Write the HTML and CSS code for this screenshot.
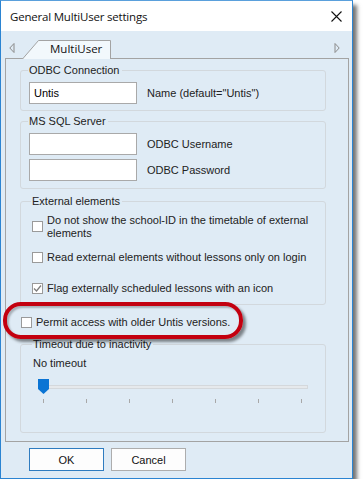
FILE: index.html
```html
<!DOCTYPE html>
<html lang="en">
<head>
    <meta charset="UTF-8">
    <title>General MultiUser settings</title>
    <link rel="stylesheet" href="styles.css">
</head>
<body>
    <div class="window">
        <div class="titlebar">
            <span class="title">General MultiUser settings</span>
            <svg class="close" width="11" height="11" viewBox="0 0 11 11">
                <path d="M0.5 0.5 L10.5 10.5 M10.5 0.5 L0.5 10.5" stroke="#111" stroke-width="1.1"/>
            </svg>
        </div>

        <div class="client">
            <div class="tab-row">
                <svg class="arrow" width="6" height="10" viewBox="0 0 6 10">
                    <path d="M5 0.5 L0.8 5 L5 9.5 Z" fill="none" stroke="#8a8a8a"/>
                </svg>
                <div class="tab">
                    <svg class="tab-shape" width="90" height="19" viewBox="0 0 90 19">
                        <path d="M0.5 19 L16.5 0.5 L88.5 0.5 L88.5 19" fill="#f2f8fc" stroke="#a3a3a3"/>
                    </svg>
                    <span class="tab-label">MultiUser</span>
                </div>
                <svg class="arrow arrow-right" width="6" height="10" viewBox="0 0 6 10">
                    <path d="M1 0.5 L5.2 5 L1 9.5 Z" fill="none" stroke="#8a8a8a"/>
                </svg>
            </div>

            <div class="panel">
                <fieldset class="group group-odbc">
                    <legend>ODBC Connection</legend>
                    <div class="field-row">
                        <div class="textbox">Untis</div>
                        <span class="field-label">Name (default="Untis")</span>
                    </div>
                </fieldset>

                <fieldset class="group group-sql">
                    <legend>MS SQL Server</legend>
                    <div class="field-row">
                        <div class="textbox"></div>
                        <span class="field-label">ODBC Username</span>
                    </div>
                    <div class="field-row second">
                        <div class="textbox"></div>
                        <span class="field-label">ODBC Password</span>
                    </div>
                </fieldset>

                <fieldset class="group group-ext">
                    <legend>External elements</legend>
                    <div class="check-row">
                        <span class="checkbox"></span>
                        <span class="check-text">Do not show the school-ID in the timetable of external elements</span>
                    </div>
                    <div class="check-row row-2">
                        <span class="checkbox"></span>
                        <span class="check-text">Read external elements without lessons only on login</span>
                    </div>
                    <div class="check-row row-3">
                        <span class="checkbox">
                            <svg width="9" height="9" viewBox="0 0 9 9">
                                <path d="M1 4.5 L3.5 7 L8 1.5" fill="none" stroke="#7d7d7d" stroke-width="1.3"/>
                            </svg>
                        </span>
                        <span class="check-text">Flag externally scheduled lessons with an icon</span>
                    </div>
                </fieldset>

                <div class="check-row permit-row">
                    <span class="checkbox"></span>
                    <span class="check-text">Permit access with older Untis versions.</span>
                </div>

                <fieldset class="group group-timeout">
                    <legend>Timeout due to inactivity</legend>
                    <div class="timeout-value">No timeout</div>
                    <div class="slider">
                        <div class="track"></div>
                        <svg class="thumb" width="11" height="15" viewBox="0 0 11 15">
                            <path d="M0 0 H11 V10 L5.5 15 L0 10 Z" fill="#0a74d4"/>
                        </svg>
                        <div class="ticks">
                            <span></span><span></span><span></span><span></span><span></span><span></span><span></span>
                        </div>
                    </div>
                </fieldset>

                <div class="highlight"></div>
            </div>

            <div class="buttons">
                <button class="btn btn-default">OK</button>
                <button class="btn">Cancel</button>
            </div>
        </div>
    </div>
</body>
</html>
```

FILE: styles.css
```css
body {
    margin: 0;
    background: #ffffff;
    font-family: "Liberation Sans", Arial, sans-serif;
    font-size: 11px;
    color: #000;
}

.window {
    width: 351px;
    height: 477px;
    border: 1px solid #2b84d2;
    border-top-color: #5aa0dc;
    background: #dfebf5;
    box-shadow: 4px 5px 4px rgba(0, 0, 0, 0.55);
    display: flex;
    flex-direction: column;
}

.titlebar {
    height: 30px;
    background: #ffffff;
    display: flex;
    align-items: center;
    justify-content: space-between;
    padding: 0 10px 0 9px;
}

.title {
    font-family: "Open Sans", "Noto Sans", sans-serif;
    font-size: 11.5px;
    color: #111;
    letter-spacing: -0.2px;
}

.close {
    display: block;
}

.client {
    flex: 1;
    display: flex;
    flex-direction: column;
}

.tab-row {
    height: 27px;
    display: flex;
    align-items: flex-end;
    position: relative;
}

.arrow {
    position: absolute;
    left: 8px;
    top: 12px;
}

.arrow-right {
    left: 333px;
}

.tab {
    position: relative;
    margin-left: 21px;
    width: 90px;
    height: 19px;
    margin-bottom: -1px;
    z-index: 1;
}

.tab-shape {
    position: absolute;
    left: 0;
    top: 0;
}

.tab-label {
    position: relative;
    display: block;
    padding-left: 28px;
    line-height: 18px;
    font-family: "Open Sans", "Noto Sans", sans-serif;
    font-size: 11.5px;
    color: #111;
}

.panel {
    position: relative;
    box-sizing: border-box;
    height: 384px;
    margin: 0 3px 0 4px;
    border: 1px solid #a3a3a3;
    padding: 5px 22px 0 14px;
}

.group {
    margin: 0;
    padding: 0 8px 0 8px;
    border: 1px solid #d2d8dd;
    border-radius: 3px;
    min-width: 0;
}

.group legend {
    padding: 0 2px 0 1px;
    margin-left: -1px;
    line-height: 13px;
    color: #222;
}

.field-row {
    display: flex;
    align-items: center;
    gap: 10px;
}

.field-row.second {
    margin-top: 4px;
}

.textbox {
    width: 98px;
    height: 20px;
    border: 1px solid #a9a9a9;
    background: #ffffff;
    padding: 0 4px;
    line-height: 20px;
}

.field-label {
    color: #222;
}

.group-odbc .field-row:first-of-type {
    margin-top: 5px;
}

.group-odbc {
    padding-bottom: 6px;
}

.group-sql {
    margin-top: 4px;
    padding-bottom: 7px;
}

.group-sql .field-row:first-of-type {
    margin-top: 5px;
}

.group-ext {
    margin-top: 6px;
    padding: 6px 4px 9px 11px;
}

.check-row {
    display: flex;
    align-items: flex-start;
    gap: 4px;
    line-height: 13px;
}

.checkbox {
    flex: none;
    width: 11px;
    height: 11px;
    margin-top: 1px;
    box-sizing: border-box;
    border: 1px solid #9a9a9a;
    background: #ffffff;
    display: flex;
    align-items: center;
    justify-content: center;
}

.group-ext .check-row:first-of-type .checkbox {
    margin-top: 7px;
}

.group-ext .check-row:first-of-type .check-text {
    width: 262px;
}

.check-text {
    color: #222;
}

.row-2 {
    margin-top: 11px;
}

.row-3 {
    margin-top: 18px;
}

.permit-row {
    margin: 11px 0 0 1px;
}

.group-timeout {
    margin-top: 9px;
    height: 93px;
    padding: 0 8px 0 12px;
}

.timeout-value {
    margin-top: 6px;
    line-height: 13px;
    color: #222;
}

.slider {
    position: relative;
    margin-top: 9px;
    height: 24px;
    margin-left: 5px;
    width: 270px;
}

.track {
    position: absolute;
    left: 4px;
    right: 0;
    top: 6px;
    height: 2px;
    background: #e6e9ec;
    border: 1px solid #d4d8dc;
}

.thumb {
    position: absolute;
    left: 0;
    top: 0;
}

.ticks {
    position: absolute;
    left: 5px;
    right: 6px;
    top: 20px;
    display: flex;
    justify-content: space-between;
}

.ticks span {
    width: 1px;
    height: 4px;
    background: #a8a8a8;
}

.highlight {
    position: absolute;
    left: -3px;
    top: 243px;
    width: 232px;
    height: 29px;
    border: 4px solid #c3000f;
    border-radius: 18px;
    box-shadow: 3px 3px 3px rgba(0, 0, 0, 0.45), inset 2px 2px 2px rgba(0, 0, 0, 0.25);
    pointer-events: none;
}

.buttons {
    display: flex;
    gap: 7px;
    padding: 6px 0 0 28px;
}

.btn {
    width: 75px;
    height: 23px;
    font-family: "Liberation Sans", Arial, sans-serif;
    font-size: 11px;
    color: #111;
    background: #fdfdfd;
    border: 1px solid #adadad;
    padding: 0;
}

.btn-default {
    border-color: #2f7cc0;
}
```
